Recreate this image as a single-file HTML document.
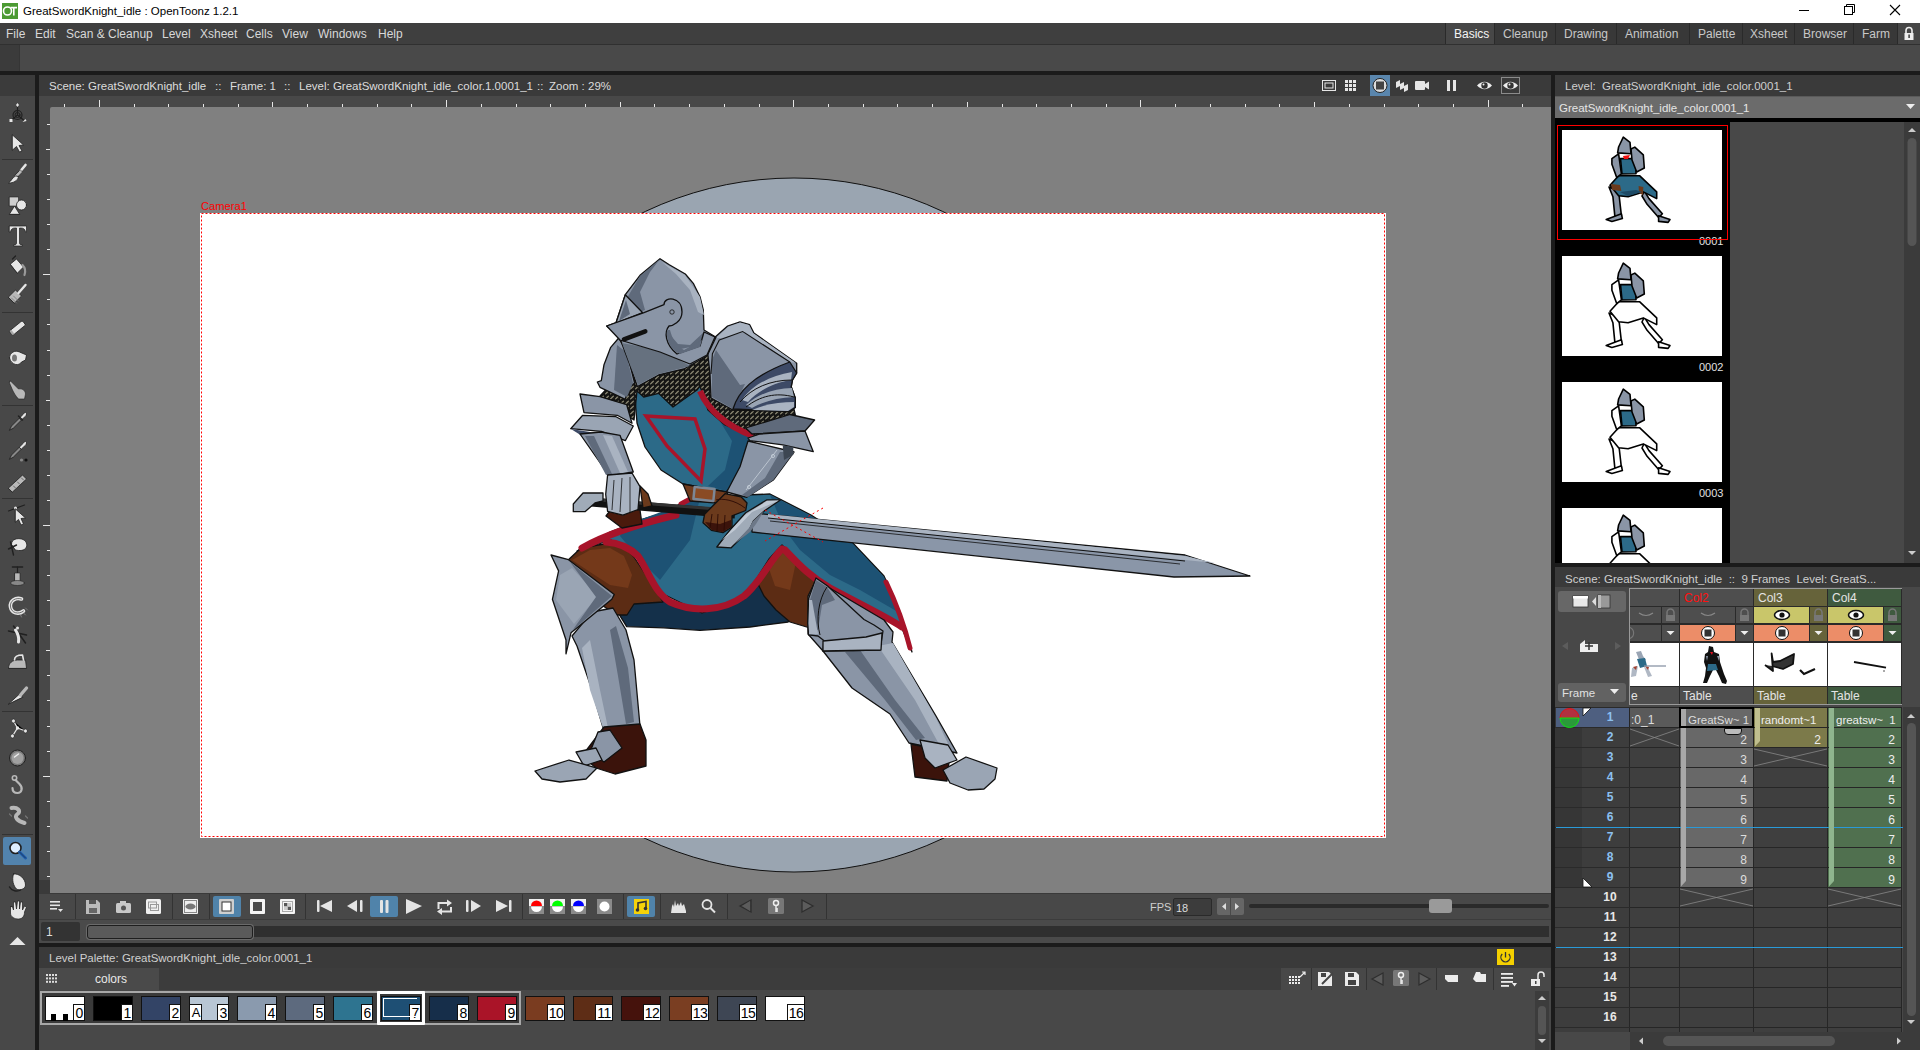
<!DOCTYPE html>
<html><head><meta charset="utf-8">
<style>
*{margin:0;padding:0;box-sizing:border-box}
html,body{width:1920px;height:1050px;overflow:hidden;background:#1b1b1b;font-family:"Liberation Sans",sans-serif;font-size:12px;color:#d8d8d8}
.a{position:absolute}
.t{position:absolute;white-space:nowrap;line-height:12px}
svg{position:absolute;overflow:visible}
</style></head><body>
<!-- title bar -->
<div class="a" style="left:0;top:0;width:1920px;height:23px;background:#fff"></div>
<svg style="left:2px;top:3px" width="16" height="16" viewBox="0 0 16 16">
<rect width="16" height="16" fill="#4b9a32"/>
<circle cx="5.5" cy="8" r="4" fill="none" stroke="#fff" stroke-width="1.6"/>
<path d="M8.5 4.6h6.5M11.8 4.6v8" stroke="#fff" stroke-width="1.6"/>
</svg>
<div class="t" style="left:23px;top:5px;color:#000;font-size:11.5px">GreatSwordKnight_idle : OpenToonz 1.2.1</div>
<svg style="left:1790px;top:0" width="130" height="23">
<path d="M9 10.5h10" stroke="#000" stroke-width="1"/>
<rect x="54.5" y="6.5" width="8" height="8" fill="none" stroke="#000"/>
<path d="M56.5 6.5v-2h8v8h-2" fill="none" stroke="#000"/>
<path d="M100 5l10 10M110 5l-10 10" stroke="#000" stroke-width="1.1"/>
</svg>
<!-- menu bar -->
<div class="a" style="left:0;top:23px;width:1920px;height:21px;background:#3f3f3f"></div>
<div class="a" style="left:0;top:44px;width:1920px;height:1px;background:#303030"></div>
<div class="t" style="left:6px;top:28px">File</div>
<div class="t" style="left:35px;top:28px">Edit</div>
<div class="t" style="left:66px;top:28px">Scan &amp; Cleanup</div>
<div class="t" style="left:162px;top:28px">Level</div>
<div class="t" style="left:200px;top:28px">Xsheet</div>
<div class="t" style="left:246px;top:28px">Cells</div>
<div class="t" style="left:282px;top:28px">View</div>
<div class="t" style="left:318px;top:28px">Windows</div>
<div class="t" style="left:378px;top:28px">Help</div>
<!-- room tabs -->
<div class="a" style="left:1445px;top:23px;width:453px;height:21px;background:#383838"></div>
<div class="a" style="left:1446px;top:23px;width:48px;height:21px;background:#474747"></div>
<div class="a" style="left:1445px;top:23px;width:1px;height:21px;background:#2a2a2a"></div>
<div class="a" style="left:1494px;top:23px;width:1px;height:21px;background:#2a2a2a"></div>
<div class="a" style="left:1555px;top:23px;width:1px;height:21px;background:#2a2a2a"></div>
<div class="a" style="left:1616px;top:23px;width:1px;height:21px;background:#2a2a2a"></div>
<div class="a" style="left:1689px;top:23px;width:1px;height:21px;background:#2a2a2a"></div>
<div class="a" style="left:1742px;top:23px;width:1px;height:21px;background:#2a2a2a"></div>
<div class="a" style="left:1794px;top:23px;width:1px;height:21px;background:#2a2a2a"></div>
<div class="a" style="left:1853px;top:23px;width:1px;height:21px;background:#2a2a2a"></div>
<div class="a" style="left:1897px;top:23px;width:1px;height:21px;background:#2a2a2a"></div>
<div class="a" style="left:1898px;top:23px;width:22px;height:21px;background:#464646"></div>
<div class="t" style="left:1454px;top:28px;color:#f4f4f4">Basics</div>
<div class="t" style="left:1503px;top:28px;color:#c8c8c8">Cleanup</div>
<div class="t" style="left:1564px;top:28px;color:#c8c8c8">Drawing</div>
<div class="t" style="left:1625px;top:28px;color:#c8c8c8">Animation</div>
<div class="t" style="left:1698px;top:28px;color:#c8c8c8">Palette</div>
<div class="t" style="left:1750px;top:28px;color:#c8c8c8">Xsheet</div>
<div class="t" style="left:1803px;top:28px;color:#c8c8c8">Browser</div>
<div class="t" style="left:1862px;top:28px;color:#c8c8c8">Farm</div>
<svg style="left:1903px;top:26px" width="12" height="15">
<path d="M3 7V4.5a3 3 0 0 1 6 0V7" fill="none" stroke="#eee" stroke-width="1.6"/>
<rect x="1.5" y="7" width="9" height="7" fill="#eee"/>
<rect x="5.3" y="8.5" width="1.6" height="3.5" fill="#444"/>
</svg>
<!-- toolbar row -->
<div class="a" style="left:0;top:45px;width:1920px;height:26px;background:#494949"></div>
<div class="a" style="left:0;top:45px;width:19px;height:26px;background:#3b3b3b"></div>
<div class="a" style="left:19px;top:45px;width:1px;height:26px;background:#353535"></div>

<div class="a" style="left:0;top:71px;width:1920px;height:4px;background:#1b1b1b"></div>
<div class="a" style="left:0;top:75px;width:35px;height:975px;background:#484848"></div>
<div class="a" style="left:0;top:75px;width:35px;height:21px;background:#3b3b3b"></div>
<div class="a" style="left:39px;top:75px;width:1512px;height:21px;background:#3a3a3a"></div>
<div class="t" style="left:49px;top:80px;color:#dcdcdc;font-size:11.5px">Scene: GreatSwordKnight_idle</div>
<div class="t" style="left:215px;top:80px;color:#dcdcdc;font-size:11.5px">::</div>
<div class="t" style="left:230px;top:80px;color:#dcdcdc;font-size:11.5px">Frame: 1</div>
<div class="t" style="left:284px;top:80px;color:#dcdcdc;font-size:11.5px">::</div>
<div class="t" style="left:299px;top:80px;color:#dcdcdc;font-size:11.5px">Level: GreatSwordKnight_idle_color.1.0001_1</div>
<div class="t" style="left:537px;top:80px;color:#dcdcdc;font-size:11.5px">::</div>
<div class="t" style="left:549px;top:80px;color:#dcdcdc;font-size:11.5px">Zoom : 29%</div>
<div class="a" style="left:39px;top:96px;width:1512px;height:797px;background:#484848"></div>
<div class="a" style="left:50px;top:107px;width:1501px;height:786px;background:#808080;border-top-left-radius:2px"></div>
<svg style="left:0;top:0" width="1920" height="1050" fill="#e6e6e6"><rect x="64" y="104" width="1" height="3"/><rect x="99" y="100" width="1" height="7"/><rect x="134" y="104" width="1" height="3"/><rect x="168" y="104" width="1" height="3"/><rect x="203" y="104" width="1" height="3"/><rect x="238" y="104" width="1" height="3"/><rect x="272" y="102" width="1" height="5"/><rect x="307" y="104" width="1" height="3"/><rect x="342" y="104" width="1" height="3"/><rect x="377" y="104" width="1" height="3"/><rect x="411" y="104" width="1" height="3"/><rect x="446" y="100" width="1" height="7"/><rect x="481" y="104" width="1" height="3"/><rect x="516" y="104" width="1" height="3"/><rect x="550" y="104" width="1" height="3"/><rect x="585" y="104" width="1" height="3"/><rect x="620" y="102" width="1" height="5"/><rect x="654" y="104" width="1" height="3"/><rect x="689" y="104" width="1" height="3"/><rect x="724" y="104" width="1" height="3"/><rect x="759" y="104" width="1" height="3"/><rect x="793" y="100" width="1" height="7"/><rect x="828" y="104" width="1" height="3"/><rect x="863" y="104" width="1" height="3"/><rect x="897" y="104" width="1" height="3"/><rect x="932" y="104" width="1" height="3"/><rect x="967" y="102" width="1" height="5"/><rect x="1002" y="104" width="1" height="3"/><rect x="1036" y="104" width="1" height="3"/><rect x="1071" y="104" width="1" height="3"/><rect x="1106" y="104" width="1" height="3"/><rect x="1140" y="100" width="1" height="7"/><rect x="1175" y="104" width="1" height="3"/><rect x="1210" y="104" width="1" height="3"/><rect x="1245" y="104" width="1" height="3"/><rect x="1279" y="104" width="1" height="3"/><rect x="1314" y="102" width="1" height="5"/><rect x="1349" y="104" width="1" height="3"/><rect x="1384" y="104" width="1" height="3"/><rect x="1418" y="104" width="1" height="3"/><rect x="1453" y="104" width="1" height="3"/><rect x="1488" y="100" width="1" height="7"/><rect x="1522" y="104" width="1" height="3"/><rect x="47" y="124" width="3" height="1"/><rect x="46" y="149" width="4" height="1"/><rect x="47" y="174" width="3" height="1"/><rect x="47" y="199" width="3" height="1"/><rect x="47" y="224" width="3" height="1"/><rect x="47" y="249" width="3" height="1"/><rect x="43" y="274" width="7" height="1"/><rect x="47" y="299" width="3" height="1"/><rect x="47" y="324" width="3" height="1"/><rect x="47" y="350" width="3" height="1"/><rect x="47" y="375" width="3" height="1"/><rect x="46" y="400" width="4" height="1"/><rect x="47" y="425" width="3" height="1"/><rect x="47" y="450" width="3" height="1"/><rect x="47" y="475" width="3" height="1"/><rect x="47" y="500" width="3" height="1"/><rect x="43" y="525" width="7" height="1"/><rect x="47" y="550" width="3" height="1"/><rect x="47" y="575" width="3" height="1"/><rect x="47" y="600" width="3" height="1"/><rect x="47" y="625" width="3" height="1"/><rect x="46" y="650" width="4" height="1"/><rect x="47" y="675" width="3" height="1"/><rect x="47" y="700" width="3" height="1"/><rect x="47" y="726" width="3" height="1"/><rect x="47" y="751" width="3" height="1"/><rect x="43" y="776" width="7" height="1"/><rect x="47" y="801" width="3" height="1"/><rect x="47" y="826" width="3" height="1"/><rect x="47" y="851" width="3" height="1"/><rect x="47" y="876" width="3" height="1"/></svg>
<div class="a" style="left:35px;top:75px;width:4px;height:975px;background:#1b1b1b"></div>
<div class="a" style="left:1551px;top:75px;width:4px;height:975px;background:#1b1b1b"></div>
<div class="a" style="left:39px;top:943px;width:1512px;height:4px;background:#1b1b1b"></div>
<div class="a" style="left:1555px;top:563px;width:365px;height:4px;background:#1b1b1b"></div>
<div class="a" style="left:39px;top:880px;width:11px;height:13px;background:#3a3a3a"></div>
<svg style="left:0;top:0" width="1920" height="1050">
<defs><clipPath id="cv"><rect x="50" y="107" width="1501" height="786"/></clipPath></defs>
<g clip-path="url(#cv)">
<circle cx="794" cy="525" r="347" fill="#9aa5b1" stroke="#111" stroke-width="1"/>
<rect x="200" y="213" width="1186" height="625" fill="#fff"/>
<rect x="201.5" y="213.5" width="1183" height="623" fill="none" stroke="#f00" stroke-width="1" stroke-dasharray="2 2"/>
</g>
<text x="201" y="210" fill="#f00" font-size="11" font-family="Liberation Sans" textLength="46" lengthAdjust="spacingAndGlyphs">Camera1</text>
</svg>

<svg style="left:0;top:0" width="1920" height="1050" stroke-linejoin="round">
<!-- ===== LOWER BODY ===== -->
<g stroke="#111" stroke-width="1.3">
<!-- dark under skirt -->
<path fill="#14304a" d="M612,598 L620.5,616.7 L626.7,626.6 L663.8,627.8 L700,630.3 L750,627 L788,622 L806,602 L800,575 L770,570 L744,596 L702,612 L661,598 Z"/>
<!-- brown thighs -->
<path fill="#5c2c14" d="M566,562 L581,548 L604,544 L624,546 L634,557 L649,579.5 L663,602 L634,604 L627,615 L617,615 L600,604 L575,598 L560,582 Z"/>
<path fill="#74391a" stroke="none" d="M572,560 L590,550 L610,548 L624,556 L632,575 L628,588 L610,585 L590,572 Z"/>
<path fill="#5c2c14" d="M756,580 L769,558 L782,544 L800,562 L816,578 L812,600 L810,628 L790,622 L776,610 L764,596 Z"/>
<path fill="#74391a" stroke="none" d="M768,566 L782,548 L796,562 L790,590 L775,586 Z"/>
<!-- skirt -->
<path fill="#2c6a88" d="M577,551 L610,532 L643,519 L663,513 L680,504 L692,497 L770,494 L811,515 L850,540 L884,576 L900,612 L912,652 L900,624 L815,578 L782,545 L769,559 L744,599 L702,613 L661,593 L640,559 L611,540 Z"/>
</g>
<path fill="#1d5274" d="M625,525 L700,498 L690,540 L660,580 L640,560 L620,536 Z"/>
<path fill="#1d5274" d="M770,495 L811,516 L850,541 L884,577 L898,612 L860,590 L830,575 L800,550 L785,530 Z"/>

<!-- red trims -->
<g fill="none" stroke="#a8142a" stroke-width="7" stroke-linecap="round">
<path d="M606,542 C620,543 630,548 638,556 C648,570 654,592 670,602 C692,612 722,612 744,596 C760,583 770,560 782,549"/>
<path d="M785,550 C800,566 812,578 830,588 C860,604 885,616 902,627"/>
<path stroke-width="5" d="M886,582 C898,607 906,632 910,648"/>
<path stroke-width="7" d="M582,548 C600,538 625,527 676,515"/><path stroke-width="5" d="M681,504 L692,498"/>
</g>
<g stroke="#111" stroke-width="1.3">
<!-- left leg greave -->
<path fill="#8a95a6" d="M572,636 L592,612 L613,608 L626,630 L634,660 L640,726 L604,731 L592,690 L577,646 Z"/>
<path fill="#5f6a7b" stroke="none" d="M610,630 L616,626 L628,668 L634,722 L626,724 L618,676 Z"/>
<path fill="#a9b3c1" stroke="none" d="M582,648 L590,640 L600,690 L608,728 L603,728 L590,690 Z"/>
<!-- left foot -->
<path fill="#3b130b" d="M604,727 L640,724 L646,740 L646,766 L615,774 L596,768 L582,756 Z"/>
<path fill="#8a95a6" d="M598,732 L610,730 L622,748 L604,762 L590,752 Z"/>
<path fill="#9aa5b4" d="M576,752 L596,748 L602,760 L584,766 Z"/>
<path fill="#9aa5b4" d="M535,771 L569,760 L597,768 L586,779 L560,782 L542,779 Z"/>
<!-- left knee -->
<path fill="#8a95a6" d="M551,555 L568.5,559.7 L614.3,594.4 L611.8,599.3 L571,632.8 L566,653.8 L566,640 L552.4,599.3 L558.6,570.9 Z"/>
<path fill="#9aa5b4" stroke="none" d="M560,575 L572,568 L598,596 L574,624 L556,600 Z"/>
<path fill="#5f6a7b" stroke="none" d="M570,562 L612,596 L572,631 L596,597 Z"/>
<!-- right leg -->
<path fill="#8a95a6" d="M808,596 L816,580 L850,600 L884,620 L893,632 L892,642 L936,716 L957,753 L909,743 L890,714 L852,688 L823,651 L808,634 Z"/>
<path fill="#5f6a7b" stroke="none" d="M845,652 L860,650 L895,700 L925,738 L916,740 L885,700 Z"/>
<path fill="#a9b3c1" stroke="none" d="M878,646 L893,643 L936,718 L950,748 L940,746 L915,700 Z"/>
<path fill="#8a95a6" d="M816,578 L827.6,586 L864,619.5 L874,625 L883,631 L880,650 L823,651 L823.8,640.5 L818,636 L808.6,634.8 L807.6,623.3 L808.6,598.6 Z"/>
<path fill="#5f6a7b" stroke="none" d="M816,580 L827,587 L835,600 L822,605 L818,630 L811,630 L810,600 Z"/><path fill="#a9b3c1" stroke="none" d="M809,600 L812,600 L818,634 L809,634 Z"/><path fill="none" stroke-width="1" d="M827,587 C818,600 816,620 820,635"/>
<path fill="#a9b3c1" d="M823,641 L866,637 L882,633 L881,650 L823,651 Z"/>
<!-- right foot -->
<path fill="#3b130b" d="M911,744 L950,752 L947,781 L915,777 Z"/>
<path fill="#a9b3c1" d="M920,740 L948,745 L957,760 L935,768 L925,758 Z"/>
<path fill="#9aa5b4" d="M943,770 L966,757 L997,768 L995,779 L984,789 L968,790 L950,783 Z"/>
</g>
<!-- ===== UPPER BODY ===== -->
<g stroke="#111" stroke-width="1.3">
<!-- chainmail -->
<!-- chest tabard -->
<path fill="#2c6a88" d="M634,385 L700,380 L722,410 L754,434 L752,445 L735,480 L726,492 L683,484 L661,470 L645,447 L637,423 Z"/>
</g>
<path fill="#1d5274" d="M712,406 L754,435 L750,448 L735,480 L726,491 L708,486 L725,470 L732,441 L718,418 Z"/>
<g stroke="#111" stroke-width="1.3"><defs><pattern id="cm" width="5" height="5" patternUnits="userSpaceOnUse"><rect width="5" height="5" fill="#1f1e1a"/><path d="M0.6,3.8 L3.4,1.2" stroke="#9a967f" stroke-width="1.1" stroke-linecap="round"/></pattern></defs>
<path fill="url(#cm)" d="M622,345 L707,350 L712,370 L735,408 L793,405 L796,418 L755,437 L725,425 L708,410 L700,386 L697,390 L687,397 L673,407 L658.6,393.4 L643.7,397 L637,391 L634,420 L600,396 L615,380 Z"/>
</g>
<g fill="none" stroke="#a8142a" stroke-linejoin="miter">
<path stroke-width="6" d="M700,391 C708,410 725,425 753,436"/>
<path stroke-width="3.5" d="M646,416 L695,419 L705,449 L701,481 L667,446 Z"/>
</g>
<g stroke="#111" stroke-width="1.3">
<!-- belt -->
<path fill="#6f3b1d" d="M683,484 L727,492 L731,504 L690,501 Z"/>
<rect x="694" y="488" width="20" height="12" fill="#8a4b25" stroke="#7d8795" stroke-width="2.5" transform="rotate(6 704 494)"/>
<!-- left pauldron -->
<path fill="#8a95a6" d="M618.7,338 L610.7,347.3 L604,364.7 L601.3,380.7 L597.3,382 L600,387.3 L625.3,399.3 L629.3,386 L634.7,383.3 L626.7,351.3 Z"/>
<path fill="#5f6a7b" stroke="none" d="M617,345 L626,352 L633,383 L627,397 L614,390 Z"/>
<path fill="#8a95a6" d="M580,394 L600,396.7 L626.7,404.7 L632,423.3 L617.3,415.3 L584,412.7 Z"/>
<path fill="#9aa5b4" d="M570.7,428.7 L582.7,415.3 L616,416.7 L633.3,426 L625.3,440.7 L601.3,431.3 Z"/>
<path fill="#3d4a66" stroke="none" d="M571,429 L590,432 L605,436 L582,436 Z"/>
<!-- left forearm -->
<path fill="#8a95a6" d="M580,434 L601,432 L620,435.3 L633.3,472 L609.3,476 Z"/>
<path fill="#a9b3c1" stroke="none" d="M603,435 L612,436 L628,472 L620,473 Z"/>
<path fill="#5f6a7b" stroke="none" d="M585,436 L594,436 L612,474 L606,475 Z"/>
<!-- right pauldron -->
<path fill="#8a95a6" d="M705.5,333 L715.2,337.1 L727.6,326 L740,321.9 L749.7,324.7 L753.9,333 L796.7,363.3 L796.7,373 L792.5,380 L791.2,386.8 L795.3,397.9 L795.3,407.5 L788.4,411.7 L733,410 L711,398 L710,374 Z"/>
<path fill="#a9b3c1" stroke="none" d="M716,338 L728,327 L740,322.5 L749,325 L753,333 L796,363 L790,362 L745,332 L722,338 Z"/>
<path fill="#5f6a7b" stroke="none" d="M712,360 L716,350 L740,385 L745,384 L733,409 L712,397 Z"/>
<path fill="none" stroke-width="1.1" d="M711,374 L712.4,353.7 L719.3,339.9 L742.8,331.6 L789.8,362"/>
<!-- lames -->
<path fill="#3d4a66" d="M733,409 C738,392 752,376 789.8,362 L796.7,373 L792.5,380 L791.2,386.8 L795.3,397.9 L795.3,407.5 L788.4,411.7 Z"/>
<path fill="#a9b3c1" stroke="none" d="M742,400 C752,385 770,376 792,372 L791,380 C772,383 757,392 748,402 Z"/>
<path fill="#9aa5b4" stroke="none" d="M746,405 C758,394 775,388 792,388 L794,397 C776,398 762,402 752,408 Z"/>
<path fill="#a9b3c1" stroke="none" d="M752,410 C765,404 780,402 794,402 L794,407 L788,411 Z"/>
<path fill="none" stroke-width="1" d="M740,402 C752,388 770,380 792,380 M746,407 C760,396 776,392 794,397"/>
<!-- lower lames -->
<path fill="#5f6a7b" d="M745.6,428 L790,414.5 L814.6,420 L805,431 L752,434 Z"/>
<path fill="#8a95a6" d="M748,438 L760,434 L805,431 L813.3,451.7 L782.9,444.8 L749.7,440.7 Z"/>
<!-- right forearm -->
<path fill="#8a95a6" d="M748,441 L794,452 L773.3,480 L746.7,497.3 L726.7,492 L740,466.7 Z"/>
<path fill="#5f6a7b" stroke="none" d="M780,452 L794,452 L773.3,480 L748,497 L742,495 L765,478 Z"/>
<path fill="#3d4652" stroke="none" d="M782.7,445.3 L793.3,447 L793.3,454.7 L784,460 Z"/>
<path fill="none" stroke="#c8d0da" stroke-width="0.8" d="M777,450 L746,490"/>
<circle cx="773" cy="456" r="1.6" fill="none" stroke="#c8d0da" stroke-width="0.8"/>
<circle cx="749" cy="487" r="1.6" fill="none" stroke="#c8d0da" stroke-width="0.8"/>
<!-- helmet -->
<path fill="#8a95a6" d="M660,258.7 L669.3,264.7 L685.3,274 L693.3,283.3 L700,296.7 L703.3,310 L704,330 L716,337.3 L707,356 L684,369 L658.6,375 L637.4,386.6 L630,365 L621.3,342 L618.7,335.3 L606.7,326 L616,322.7 L625.3,294.7 L640,275.3 Z"/>
<path fill="#5f6a7b" stroke="none" d="M627,298 L640,276 L660,259 L650,272 L640,292 L645,310 L630,316 Z"/>
<path fill="#a9b3c1" stroke="none" d="M662,262 L685,275 L700,297 L704,315 L698,312 L690,290 L676,274 Z"/>
<path fill="#66717f" stroke="none" d="M622,343 L648,348 L672,356 L690,366 L658.6,374 L638,385 L630,365 Z"/>
<path fill="#5f6a7b" stroke="none" d="M666,330 L676,350 L700,345 L704,332 L690,345 L678,344 Z"/>
<path fill="#9aa5b4" d="M616,323 L625.3,294.7 L642.7,312.7 Z"/><path fill="#5f6a7b" stroke="none" d="M619,321 L626,300 L630,314 Z"/>
<!-- visor -->
<path fill="#8a95a6" d="M606.7,326 L644,312.7 L664,304.7 C664,296 682,296 682,312 C682,322 672,326 669,326 C664,332 665,344 677,354 L700,346 L704,332 L715,337 L707,355 L690,364 L660,352 L620,340 Z"/>
<path fill="#5f6a7b" stroke="none" d="M667,330 C666,340 670,350 680,354 L700,347 L702,340 L684,350 C676,346 672,338 670,330 Z"/>
<circle cx="672" cy="312" r="2.2" fill="none" stroke-width="0.8"/>
<path d="M624,339.3 L645.3,331.3" stroke-width="4.5" stroke-linecap="round"/>

<!-- sword hilt -->
<path fill="none" stroke="#111" stroke-width="9" stroke-linecap="butt" d="M591,502 L735,514"/><path fill="none" stroke="#333" stroke-width="3" d="M600,500 L730,510"/>
<path fill="#a0abb8" d="M573.3,504 L583,493 L603,493 L603,501 L595,503 L585,511.7 L573.3,511.7 Z"/>
<!-- left hand & gauntlet -->
<path fill="#4a1a0c" d="M612,508 L640,510 L642,524 L622,528 L606,516 Z"/>
<path fill="#6b3a1c" d="M640,486 L648,494 L652,506 L643,508 Z"/>
<path fill="#a9b3c1" d="M607.6,475 L632,473 L640,486.7 L638,509.5 L622.9,515.2 L607.6,511.4 L605.7,494.3 Z"/>
<path fill="none" stroke-width="0.8" d="M614,480 L612,510 M622,478 L620,512 M630,477 L630,512"/>
<!-- right hand -->
<path fill="#6b3a1c" d="M713.7,505 L725,493.7 L741,496.8 L747,503 L745.7,510.5 L732,515.8 L732,527 L722.9,532.6 L711.4,530.3 L703,522.7 L704.6,514.3 Z"/>
<path fill="#3b130b" stroke="none" d="M705,522 L712,530 L722,532 L731,527 L731,520 L720,524 Z"/>
<path fill="none" stroke="#2a0a04" stroke-width="0.9" d="M712,514 L710,528 M718,514 L717,531 M725,515 L724,531 M716,500 C722,498 735,500 745,508"/>
<!-- blade -->
<path fill="#8a96a8" d="M752,513 L1185,555 L1250,576 L1174,577 L752,532 Z"/>
<path fill="#a9b3c1" stroke="none" d="M768,514 L1185,556 L1215,563 L768,518 Z"/>
<path fill="none" stroke-width="1" d="M768,518 L1185,561"/>
<path fill="none" stroke-width="0.8" d="M770,521 L1180,564"/>
<!-- crossguard -->
<path fill="#a0abb8" d="M716.8,547 L730,530 L745.7,512.8 L767,499.8 L780.8,499.8 L764.8,510.5 L753.4,521 L749.5,529.5 L731.2,547.8 Z"/>
<path fill="#c0c9d4" stroke="none" d="M722,540 L745,515 L767,501 L779,500.5 L752,512 L735,530 Z"/>
<path fill="#6d7888" stroke="none" d="M733,545 L749,528 L753,521 L764,511 L756,524 L750,532 Z"/>
</g>
<!-- red center marker -->
<path d="M765,510 L823,542 M823,508 L765,541" stroke="#f00" stroke-width="1" stroke-dasharray="2 3" fill="none"/>
</svg>

<svg style="left:0;top:0" width="36" height="1050" stroke-linecap="round" stroke-linejoin="round">
<rect x="2" y="159" width="31" height="1" fill="#333"/>
<rect x="2" y="312" width="31" height="1" fill="#333"/>
<rect x="2" y="405" width="31" height="1" fill="#333"/>
<rect x="2" y="498" width="31" height="1" fill="#333"/>
<rect x="2" y="711" width="31" height="1" fill="#333"/>
<rect x="2" y="834" width="31" height="1" fill="#333"/>
<rect x="3" y="837" width="28" height="28" rx="2" fill="#5283ad"/>
<g transform="translate(17.5 113)"><path d="M0,-7 V2 M0,2 L-6,7 M0,2 L6,7" stroke="#202020" stroke-width="1.2" fill="none"/><circle cx="0" cy="2" r="4.5" fill="none" stroke="#202020" stroke-width="1.2"/><circle cx="0" cy="2" r="2.5" fill="none" stroke="#202020" stroke-width="1"/><path d="M0,-10 L1.5,-8 L0,-6 L-1.5,-8 Z" fill="#e6e6e6"/><rect x="-8" y="6" width="3" height="3" fill="#e6e6e6"/><path d="M5,9 L8,6 L9,8 Z" fill="#e6e6e6"/></g>
<g transform="translate(17.5 143)"><path d="M-5,-8 L6,2 L1.5,2.5 L4.5,8 L2,9 L-1,3.5 L-5,7 Z" fill="#e6e6e6" stroke="#202020" stroke-width="0.8"/></g>
<g transform="translate(17.5 174)"><path d="M8,-9 L3,-3" stroke="#e6e6e6" stroke-width="2.6"/><path d="M3,-4 L5,-2 L-1,4 L-3,2 Z" fill="#b8b8b8" stroke="#202020" stroke-width="0.6"/><path d="M-2,2 C-5,3 -6,7 -9,9 C-4,9 0,7 1,3 Z" fill="#e6e6e6" stroke="#202020" stroke-width="0.8"/></g>
<g transform="translate(17.5 205)"><rect x="-8" y="-8" width="9" height="9" fill="#cfcfcf" stroke="#202020" stroke-width="0.6"/><circle cx="4" cy="0" r="5" fill="#e6e6e6" stroke="#202020" stroke-width="0.8"/><path d="M-8,9 L-3,1 L2,9 Z" fill="#e6e6e6" stroke="#202020" stroke-width="0.8"/></g>
<g transform="translate(17.5 236)"><path d="M-8,-10 H9 V-4 H8 C7.5,-7 6,-8 3,-8 H2 V7 C2,8.5 3,9 5,9 V10 H-4 V9 C-2,9 -1,8.5 -1,7 V-8 H-2 C-5,-8 -6.5,-7 -7,-4 H-8 Z" fill="#e6e6e6" stroke="#202020" stroke-width="0.7"/></g>
<g transform="translate(17.5 266)"><path d="M-7,-2 L-1,-7 L6,1 L0,7 Z" fill="#e6e6e6" stroke="#202020" stroke-width="0.8"/><path d="M-5,-7 L-2,-10" stroke="#202020" stroke-width="1.2"/><path d="M5,-1 C8,2 8,6 7,9" stroke="#999" stroke-width="2.2" fill="none"/></g>
<g transform="translate(17.5 294)"><path d="M-9,3 L-2,-4 L4,2 L-3,9 Z" fill="#b8b8b8" stroke="#202020" stroke-width="0.8"/><path d="M-6,4 L-1,9 M-4,2 L1,7" stroke="#777" stroke-width="0.8"/><path d="M1,-1 L8,-9" stroke="#e6e6e6" stroke-width="2.4"/></g>
<g transform="translate(17.5 328)"><path d="M-8,3 L3,-6 C4,-7 5,-7 6,-6 L8,-3 L-3,6 C-4,7 -5,7 -6,6 Z" fill="#e6e6e6" stroke="#202020" stroke-width="0.8"/><path d="M-8,3 L-5,7 L-3,6 L-6,2 Z" fill="#aaa"/></g>
<g transform="translate(17.5 358)"><path d="M-8,0 C-8,-6 -2,-8 2,-6 L9,-3 L8,2 L4,4 C2,8 -6,8 -8,0 Z" fill="#e6e6e6" stroke="#202020" stroke-width="0.8"/><ellipse cx="-3" cy="0" rx="2.5" ry="3.5" fill="#777"/></g>
<g transform="translate(17.5 390)"><path d="M-7,-9 L1,-1 C5,-2 8,1 8,4 L7,9 L1,9 C-2,6 -4,2 -5,0 L-8,-7 Z" fill="#b8b8b8" stroke="#202020" stroke-width="0.6"/></g>
<g transform="translate(17.5 421)"><path d="M-8,9 L-6,5 L3,-4 L5,-2 L-4,7 Z" fill="#888" stroke="#202020" stroke-width="0.8"/><path d="M2,-3 L6,-7 C7,-9 9,-9 9,-7 C9,-5 7,-4 6,-3 L4,-1 Z" fill="#e6e6e6" stroke="#202020" stroke-width="0.8"/><path d="M1,-5 L5,-1" stroke="#202020" stroke-width="1.5"/></g>
<g transform="translate(17.5 452)"><path d="M-8,7 L-6,3 L3,-6 L5,-4 L-4,5 Z" fill="#888" stroke="#202020" stroke-width="0.8"/><path d="M2,-5 L6,-9 C7,-11 9,-11 9,-9 C9,-7 7,-6 6,-5 L4,-3 Z" fill="#e6e6e6" stroke="#202020" stroke-width="0.8"/><circle cx="4" cy="8" r="1.6" fill="#888"/><circle cx="8.5" cy="8" r="1.6" fill="#111"/></g>
<g transform="translate(17.5 483)"><path d="M-9,5 L5,-8 L9,-4 L-5,9 Z" fill="#b8b8b8" stroke="#202020" stroke-width="0.8"/><path d="M-4,3 L-2,5 M0,-1 L2,1 M4,-5 L6,-3" stroke="#555" stroke-width="0.8"/></g>
<g transform="translate(17.5 515)"><path d="M-9,-4 L7,-10" stroke="#202020" stroke-width="1.2"/><circle cx="-2" cy="-7" r="1.5" fill="#e6e6e6"/><path d="M-2,-6 L8,3 L3.5,3.5 L6,9 L3.5,10 L1,4.5 L-2,7 Z" fill="#e6e6e6" stroke="#202020" stroke-width="0.8"/></g>
<g transform="translate(17.5 546)"><path d="M-6,-2 C-6,-7 0,-8 4,-7 C8,-6 10,-3 9,1 C7,5 2,5 -2,4 Z" fill="#e6e6e6" stroke="#202020" stroke-width="0.8"/><path d="M-9,3 L-1,-1 M-7,-4 L-4,9" stroke="#202020" stroke-width="1.4"/></g>
<g transform="translate(17.5 576)"><path d="M-5,-9 H5" stroke="#202020" stroke-width="1.6"/><path d="M0,-9 V-3" stroke="#202020" stroke-width="1.2"/><rect x="-2.5" y="-3" width="5" height="9" fill="#b8b8b8" stroke="#202020" stroke-width="0.6"/><ellipse cx="0" cy="7" rx="7" ry="2.5" fill="#888" stroke="#202020" stroke-width="0.6"/></g>
<g transform="translate(17.5 606)"><path d="M4,-7 C-2,-9 -8,-5 -7,1 C-6,7 1,9 6,5" stroke="#e6e6e6" stroke-width="3.6" fill="none"/><path d="M4,-7 C-2,-9 -8,-5 -7,1 C-6,7 1,9 6,5" stroke="#202020" stroke-width="0.6" fill="none"/><path d="M8,2 L10,4 M6,7 L8,9 M3,9 L4,11" stroke="#888" stroke-width="0.8"/></g>
<g transform="translate(17.5 634)"><path d="M-9,-3 L9,1 M-4,-8 L8,9" stroke="#202020" stroke-width="1.5"/><path d="M-2,-4 C0,-1 2,2 1,8" stroke="#e6e6e6" stroke-width="3" fill="none"/><circle cx="0" cy="-6" r="1.5" fill="#e6e6e6"/></g>
<g transform="translate(17.5 662)"><path d="M-9,6 C-9,1 -5,-2 0,-2 L8,-2 L9,6 Z" fill="#b8b8b8" stroke="#202020" stroke-width="0.8"/><path d="M-3,-2 C-3,-6 0,-7 5,-7 L6,-2" fill="none" stroke="#e6e6e6" stroke-width="1.6"/></g>
<g transform="translate(17.5 695)"><path d="M-9,9 L2,-1 L5,2 Z" fill="#e6e6e6" stroke="#202020" stroke-width="0.8"/><path d="M3,0 L9,-7" stroke="#b8b8b8" stroke-width="3.4"/></g>
<g transform="translate(17.5 729)"><path d="M-4,-8 L0,-1 L8,2 M0,-1 L-5,7" stroke="#e6e6e6" stroke-width="1.3"/><circle cx="-4" cy="-8" r="2" fill="#e6e6e6" stroke="#202020" stroke-width="0.6"/><circle cx="8" cy="2" r="2" fill="#e6e6e6" stroke="#202020" stroke-width="0.6"/><circle cx="-5" cy="7" r="2" fill="#e6e6e6" stroke="#202020" stroke-width="0.6"/><circle cx="0" cy="-1" r="1.7" fill="#e6e6e6"/></g>
<g transform="translate(17.5 758)"><circle cx="0" cy="0" r="8" fill="#777" stroke="#202020" stroke-width="1"/><circle cx="0" cy="0" r="6" fill="#a0a0a0"/><path d="M-3,-1 L1,-4" stroke="#eee" stroke-width="1.4"/></g>
<g transform="translate(17.5 785)"><circle cx="-3" cy="-7" r="2.2" fill="none" stroke="#b8b8b8" stroke-width="1.6"/><path d="M-2,-5 L2,-1 C6,3 4,8 0,8 C-4,8 -5,5 -5,3" stroke="#b8b8b8" stroke-width="2.2" fill="none"/></g>
<g transform="translate(17.5 816)"><path d="M-6,-8 C0,-9 4,-5 0,-2 C-4,1 0,5 7,7" stroke="#b8b8b8" stroke-width="4" fill="none"/><path d="M-8,-2 L-6,0 M8,0 L10,2" stroke="#777" stroke-width="1.2"/></g>
<g transform="translate(17.5 851)"><circle cx="-2" cy="-3" r="5.5" fill="#ddeeff" stroke="#202020" stroke-width="1.6"/><path d="M2,1 L8,7" stroke="#1f5fb0" stroke-width="3"/><path d="M2,1 L8,7" stroke="#202020" stroke-width="0.6"/></g>
<g transform="translate(17.5 882)"><path d="M-4,-8 C2,-9 8,-3 8,3 C8,7 2,9 -1,7 C-4,4 -6,-2 -4,-8 Z" fill="#e6e6e6" stroke="#202020" stroke-width="0.8"/><path d="M-8,5 C-6,9 0,10 3,8" stroke="#202020" stroke-width="1.5" fill="none"/></g>
<g transform="translate(17.5 910)"><path d="M-7,-3 L-7,3 C-7,7 -3,9 1,9 C5,9 7,6 7,2 L9,-3 L7,-4 L5,0 L5,-8 L3,-8 L2,-1 L2,-9 L0,-9 L-1,-1 L-2,-8 L-4,-8 L-4,0 L-5,-3 Z" fill="#e6e6e6" stroke="#202020" stroke-width="0.7"/></g>
<g transform="translate(17.5 941)"><path d="M-8,4 L0,-4 L8,4 Z" fill="#e6e6e6"/></g>
</svg>
<div class="a" style="left:39px;top:893px;width:1512px;height:27px;background:#484848;border-top:1px solid #3a3a3a"></div>
<div class="a" style="left:39px;top:919px;width:1512px;height:1px;background:#3c3c3c"></div>
<div class="a" style="left:39px;top:920px;width:1512px;height:23px;background:#4a4a4a"></div>
<div class="a" style="left:41px;top:922px;width:39px;height:19px;background:#333;border-radius:2px"></div>
<div class="t" style="left:46px;top:926px;color:#ddd;font-size:12px">1</div>
<div class="a" style="left:86px;top:926px;width:1463px;height:11px;background:#2f2f2f"></div>
<div class="a" style="left:87px;top:925px;width:166px;height:14px;background:#5a5a5a;border:1.5px solid #1e1e1e;border-radius:3px;box-shadow:0 0 0 1px #6a6a6a"></div>
<svg style="left:0;top:0" width="1551" height="1050">
<rect x="75" y="894" width="1" height="25" fill="#333"/>
<rect x="172" y="894" width="1" height="25" fill="#333"/>
<rect x="209" y="894" width="1" height="25" fill="#333"/>
<rect x="305" y="894" width="1" height="25" fill="#333"/>
<rect x="522" y="894" width="1" height="25" fill="#333"/>
<rect x="623" y="894" width="1" height="25" fill="#333"/>
<rect x="660" y="894" width="1" height="25" fill="#333"/>
<rect x="727" y="894" width="1" height="25" fill="#333"/>
<rect x="826" y="894" width="1" height="25" fill="#333"/>
<rect x="213" y="896" width="28" height="21" rx="2" fill="#5083aa"/>
<rect x="370" y="896" width="28" height="21" rx="2" fill="#5083aa"/>
<rect x="627" y="896" width="28" height="21" rx="2" fill="#5083aa"/>
<g fill="#e4e4e4"><rect x="50" y="901" width="10" height="1.6"/><rect x="50" y="904.5" width="10" height="1.6"/><rect x="50" y="908" width="7" height="1.6"/><path d="M58,909 h5 l-2.5,3 z"/></g>
<path d="M86,900 h11 l3,3 v11 h-14 z" fill="#bbb"/><rect x="89" y="900" width="7" height="4" fill="#555"/><rect x="89" y="908" width="8" height="5" fill="#666"/>
<rect x="116" y="903" width="15" height="10" rx="1.5" fill="#c8c8c8"/><rect x="120" y="901" width="6" height="3" fill="#c8c8c8"/><circle cx="123.5" cy="908" r="2.5" fill="#555"/>
<rect x="146" y="899" width="15" height="15" rx="1.5" fill="#f0f0f0"/><rect x="148.5" y="902" width="8" height="6" fill="none" stroke="#999"/><rect x="150.5" y="904.5" width="8" height="6" fill="none" stroke="#999"/>
<rect x="183" y="899" width="15" height="15" rx="1" fill="#f0f0f0"/><rect x="184.5" y="900.5" width="12" height="12" fill="none" stroke="#222" stroke-dasharray="1 1"/><ellipse cx="190.5" cy="906.5" rx="5" ry="3" fill="#777"/>
<rect x="219" y="899" width="15" height="15" rx="1" fill="#cfcfcf"/><rect x="222" y="902" width="9" height="9" fill="#fff" stroke="#333"/>
<rect x="250" y="899" width="15" height="15" rx="1" fill="#f4f4f4"/><rect x="253" y="902" width="9" height="9" fill="#4a4a4a"/>
<rect x="280" y="899" width="15" height="15" rx="1" fill="#f4f4f4"/><rect x="282.5" y="901.5" width="10" height="10" fill="none" stroke="#aaa"/><rect x="284" y="903" width="3.5" height="3.5" fill="#555"/><rect x="287.5" y="906.5" width="3.5" height="3.5" fill="#555"/><rect x="287.5" y="903" width="3.5" height="3.5" fill="#ccc"/><rect x="284" y="906.5" width="3.5" height="3.5" fill="#ccc"/>
<g fill="#e4e4e4">
<rect x="317" y="900" width="2.5" height="12" rx="1"/><path d="M320,906 L332,900 V912 Z"/>
<path d="M347,906 L357,900 V912 Z"/><rect x="360" y="900" width="2.5" height="12" rx="1"/>
<rect x="380" y="900" width="3" height="13" rx="1"/><rect x="385.5" y="900" width="3" height="13" rx="1"/>
<path d="M406,899 L422,906 L406,914 Z"/>
</g>
<path d="M438.5,909 V903 H448 M451,907 V911.5 H441" fill="none" stroke="#e4e4e4" stroke-width="2"/><path d="M447,899.5 L452,903 L447,906.5 Z M442,908 L437,911.5 L442,915 Z" fill="#e4e4e4"/>
<g fill="#e4e4e4"><rect x="466" y="900" width="2.5" height="12" rx="1"/><path d="M471,900 L481,906 L471,912 Z"/>
<path d="M496,900 L508,906 L496,912 Z"/><rect x="509" y="900" width="2.5" height="12" rx="1"/></g>
<rect x="529" y="899" width="15" height="15" fill="#f2f2f2"/><rect x="529" y="906" width="15" height="8" fill="#8a8a8a"/><path d="M531,906 a5.5,5.5 0 0 1 11,0 z" fill="#f00"/><path d="M531,906.5 a5.5,5.5 0 0 0 11,0 z" fill="#fff"/>
<rect x="550" y="899" width="15" height="15" fill="#f2f2f2"/><rect x="550" y="906" width="15" height="8" fill="#8a8a8a"/><path d="M552,906 a5.5,5.5 0 0 1 11,0 z" fill="#0f0"/><path d="M552,906.5 a5.5,5.5 0 0 0 11,0 z" fill="#fff"/>
<rect x="571" y="899" width="15" height="15" fill="#f2f2f2"/><rect x="571" y="906" width="15" height="8" fill="#8a8a8a"/><path d="M573,906 a5.5,5.5 0 0 1 11,0 z" fill="#00f"/><path d="M573,906.5 a5.5,5.5 0 0 0 11,0 z" fill="#fff"/>
<rect x="597" y="899" width="15" height="15" fill="#8a8a8a"/><circle cx="604.5" cy="906.5" r="5" fill="#fff"/>
<rect x="634" y="899" width="15" height="15" fill="#f5d20a"/><path d="M638,910 V903 L646,901.5 V908" fill="none" stroke="#333" stroke-width="1.6"/><circle cx="637.5" cy="910" r="1.8" fill="#333"/><circle cx="645.5" cy="908.5" r="1.8" fill="#333"/>
<path d="M671,913 L672,906 L673,904 L674,907 L675,900 L676,906 L678,903 L679,906 L681,902 L682,906 L684,904 L686,911 L686,913 Z" fill="#e4e4e4"/>
<circle cx="707" cy="904.5" r="4.5" fill="none" stroke="#e4e4e4" stroke-width="1.8"/><path d="M710.5,908 L715,912.5" stroke="#e4e4e4" stroke-width="2"/>
<path d="M751,900 L740,906 L751,912 Z" fill="none" stroke="#2e2e2e" stroke-width="1.3"/><path d="M750,901 L742,906 L750,911 Z" fill="#5c5c5c"/>
<rect x="768" y="898" width="16" height="16" rx="1.5" fill="#777"/><circle cx="776" cy="903" r="2.5" fill="none" stroke="#eee" stroke-width="1.5"/><path d="M776,905.5 V912 M776,909 h2 M776,911 h2" stroke="#eee" stroke-width="1.4"/>
<path d="M802,900 L813,906 L802,912 Z" fill="#5c5c5c" stroke="#2e2e2e" stroke-width="1.3"/>
</svg>
<div class="t" style="left:1150px;top:901px;color:#cfcfcf;font-size:11px">FPS</div>
<div class="a" style="left:1173px;top:898px;width:39px;height:18px;background:#3c3c3c;border:1px solid #2a2a2a;border-radius:2px"></div>
<div class="t" style="left:1176px;top:902px;color:#dcdcdc;font-size:11px">18</div>
<div class="a" style="left:1217px;top:898px;width:27px;height:17px;background:#666;border-radius:2px"></div>
<div class="a" style="left:1230px;top:898px;width:1px;height:17px;background:#4a4a4a"></div>
<svg style="left:1217px;top:898px" width="27" height="17"><path d="M9,5 L5,8.5 L9,12 Z M18,5 L22,8.5 L18,12 Z" fill="#ddd"/></svg>
<div class="a" style="left:1249px;top:904px;width:300px;height:4px;background:#2a2a2a;border-radius:2px"></div>
<div class="a" style="left:1429px;top:899px;width:23px;height:14px;background:#9a9a9a;border-radius:3px"></div>
<div class="a" style="left:39px;top:947px;width:1512px;height:21px;background:#3a3a3a"></div>
<div class="t" style="left:49px;top:952px;color:#cfcfcf;font-size:11.5px">Level Palette: GreatSwordKnight_idle_color.0001_1</div>
<svg style="left:1497px;top:949px" width="17" height="16"><rect width="17" height="16" fill="#f5d000"/><path d="M5.2,5 A4.6,4.6 0 1 0 11.8,5" fill="none" stroke="#333" stroke-width="1.3"/><path d="M8.5,3 V8.5" stroke="#333" stroke-width="1.3"/></svg>
<div class="a" style="left:39px;top:968px;width:1512px;height:22px;background:#3c3c3c"></div>
<div class="a" style="left:39px;top:968px;width:120px;height:22px;background:#4a4a4a"></div>
<svg style="left:46px;top:974px" width="13" height="11" fill="#ddd"><rect x="0" y="0.0" width="2" height="2"/><rect x="0" y="3.4" width="2" height="2"/><rect x="0" y="6.8" width="2" height="2"/><rect x="3" y="0.0" width="2" height="2"/><rect x="3" y="3.4" width="2" height="2"/><rect x="3" y="6.8" width="2" height="2"/><rect x="6" y="0.0" width="2" height="2"/><rect x="6" y="3.4" width="2" height="2"/><rect x="6" y="6.8" width="2" height="2"/><rect x="9" y="0.0" width="2" height="2"/><rect x="9" y="3.4" width="2" height="2"/><rect x="9" y="6.8" width="2" height="2"/></svg>
<div class="t" style="left:95px;top:973px;color:#e8e8e8;font-size:12px">colors</div>
<div class="a" style="left:1281px;top:968px;width:270px;height:22px;background:#484848"></div>
<svg style="left:0;top:0" width="1551" height="1050">
<rect x="1311" y="968" width="1" height="22" fill="#333"/>
<rect x="1366" y="968" width="1" height="22" fill="#333"/>
<rect x="1436" y="968" width="1" height="22" fill="#333"/>
<rect x="1493" y="968" width="1" height="22" fill="#333"/>
<g fill="#ececec"><rect x="1289" y="976" width="2" height="2"/><rect x="1289" y="979" width="2" height="2"/><rect x="1289" y="982" width="2" height="2"/><rect x="1292" y="976" width="2" height="2"/><rect x="1292" y="979" width="2" height="2"/><rect x="1292" y="982" width="2" height="2"/><rect x="1295" y="976" width="2" height="2"/><rect x="1295" y="979" width="2" height="2"/><rect x="1295" y="982" width="2" height="2"/><rect x="1298" y="976" width="2" height="2"/><rect x="1298" y="979" width="2" height="2"/><rect x="1298" y="982" width="2" height="2"/></g><path d="M1300,977 L1305,972 M1302,972 h3 v3" stroke="#ececec" stroke-width="1.2" fill="none"/>
<path d="M1318,972 h11 l3,3 v11 h-14 z" fill="#ececec"/><rect x="1321" y="973" width="5" height="4" fill="#444"/><path d="M1322,984 L1333,973" stroke="#444" stroke-width="2"/>
<path d="M1345,972 h11 l3,3 v11 h-14 z" fill="#ececec"/><rect x="1348" y="973" width="6" height="4" fill="#444"/><rect x="1348" y="980" width="8" height="5" fill="#444"/>
<path d="M1383,973 L1372,979 L1383,985 Z" fill="#5c5c5c" stroke="#2e2e2e" stroke-width="1.2"/>
<rect x="1393" y="970" width="16" height="16" rx="1.5" fill="#777"/><circle cx="1401" cy="975" r="2.5" fill="none" stroke="#eee" stroke-width="1.5"/><path d="M1401,977.5 V984 M1401,981 h2 M1401,983 h2" stroke="#eee" stroke-width="1.4"/>
<path d="M1419,973 L1430,979 L1419,985 Z" fill="#5c5c5c" stroke="#2e2e2e" stroke-width="1.2"/>
<path d="M1445,975 h13 v7 h-10 l-3,-3 z" fill="#ececec"/>
<path d="M1476,972 h4 l1,2 h5 v8 h-10 l-3,-3 z" fill="#ececec"/>
<g fill="#ececec"><rect x="1501" y="973" width="12" height="1.8"/><rect x="1501" y="977" width="12" height="1.8"/><rect x="1501" y="981" width="12" height="1.8"/><rect x="1501" y="985" width="8" height="1.8"/><path d="M1512,983 h5 l-2.5,3.5 z"/></g>
<rect x="1531" y="979" width="9" height="7" fill="#ececec"/><path d="M1538,979 V975 a3,3 0 0 1 6,0 V977" fill="none" stroke="#ececec" stroke-width="1.5"/><rect x="1535" y="981" width="1.5" height="3" fill="#444"/>
</svg>
<div class="a" style="left:39px;top:990px;width:1512px;height:60px;background:#484848"></div>
<div class="a" style="left:40px;top:991px;width:481px;height:34px;background:#3a3a3a;border:2px solid #a8a8a8"></div>
<div class="a" style="left:45px;top:996px;width:40px;height:25px;background:#ffffff;border:1px solid #111"></div>
<div class="a" style="left:73px;top:1004px;width:11px;height:16px;background:#fff;border:1px solid #111;border-right:none;border-bottom:none"></div>
<div class="t" style="left:74px;top:1006px;width:10px;text-align:center;color:#000;font-size:14px;line-height:14px;letter-spacing:-0.6px">0</div>
<div class="a" style="left:93px;top:996px;width:40px;height:25px;background:#000000;border:1px solid #111"></div>
<div class="a" style="left:121px;top:1004px;width:11px;height:16px;background:#fff;border:1px solid #111;border-right:none;border-bottom:none"></div>
<div class="t" style="left:122px;top:1006px;width:10px;text-align:center;color:#000;font-size:14px;line-height:14px;letter-spacing:-0.6px">1</div>
<div class="a" style="left:141px;top:996px;width:40px;height:25px;background:#334466;border:1px solid #111"></div>
<div class="a" style="left:169px;top:1004px;width:11px;height:16px;background:#fff;border:1px solid #111;border-right:none;border-bottom:none"></div>
<div class="t" style="left:170px;top:1006px;width:10px;text-align:center;color:#000;font-size:14px;line-height:14px;letter-spacing:-0.6px">2</div>
<div class="a" style="left:189px;top:996px;width:40px;height:25px;background:#b8c6d4;border:1px solid #111"></div>
<div class="a" style="left:217px;top:1004px;width:11px;height:16px;background:#fff;border:1px solid #111;border-right:none;border-bottom:none"></div>
<div class="t" style="left:218px;top:1006px;width:10px;text-align:center;color:#000;font-size:14px;line-height:14px;letter-spacing:-0.6px">3</div>
<div class="a" style="left:237px;top:996px;width:40px;height:25px;background:#8a9aae;border:1px solid #111"></div>
<div class="a" style="left:265px;top:1004px;width:11px;height:16px;background:#fff;border:1px solid #111;border-right:none;border-bottom:none"></div>
<div class="t" style="left:266px;top:1006px;width:10px;text-align:center;color:#000;font-size:14px;line-height:14px;letter-spacing:-0.6px">4</div>
<div class="a" style="left:285px;top:996px;width:40px;height:25px;background:#5d6a7e;border:1px solid #111"></div>
<div class="a" style="left:313px;top:1004px;width:11px;height:16px;background:#fff;border:1px solid #111;border-right:none;border-bottom:none"></div>
<div class="t" style="left:314px;top:1006px;width:10px;text-align:center;color:#000;font-size:14px;line-height:14px;letter-spacing:-0.6px">5</div>
<div class="a" style="left:333px;top:996px;width:40px;height:25px;background:#2e7490;border:1px solid #111"></div>
<div class="a" style="left:361px;top:1004px;width:11px;height:16px;background:#fff;border:1px solid #111;border-right:none;border-bottom:none"></div>
<div class="t" style="left:362px;top:1006px;width:10px;text-align:center;color:#000;font-size:14px;line-height:14px;letter-spacing:-0.6px">6</div>
<div class="a" style="left:381px;top:996px;width:40px;height:25px;background:#1e4f74;border:1px solid #111"></div>
<div class="a" style="left:409px;top:1004px;width:11px;height:16px;background:#fff;border:1px solid #111;border-right:none;border-bottom:none"></div>
<div class="t" style="left:410px;top:1006px;width:10px;text-align:center;color:#000;font-size:14px;line-height:14px;letter-spacing:-0.6px">7</div>
<div class="a" style="left:429px;top:996px;width:40px;height:25px;background:#162e4a;border:1px solid #111"></div>
<div class="a" style="left:457px;top:1004px;width:11px;height:16px;background:#fff;border:1px solid #111;border-right:none;border-bottom:none"></div>
<div class="t" style="left:458px;top:1006px;width:10px;text-align:center;color:#000;font-size:14px;line-height:14px;letter-spacing:-0.6px">8</div>
<div class="a" style="left:477px;top:996px;width:40px;height:25px;background:#aa1428;border:1px solid #111"></div>
<div class="a" style="left:505px;top:1004px;width:11px;height:16px;background:#fff;border:1px solid #111;border-right:none;border-bottom:none"></div>
<div class="t" style="left:506px;top:1006px;width:10px;text-align:center;color:#000;font-size:14px;line-height:14px;letter-spacing:-0.6px">9</div>
<div class="a" style="left:525px;top:996px;width:40px;height:25px;background:#7a3c20;border:1px solid #111"></div>
<div class="a" style="left:547px;top:1004px;width:17px;height:16px;background:#fff;border:1px solid #111;border-right:none;border-bottom:none"></div>
<div class="t" style="left:548px;top:1006px;width:16px;text-align:center;color:#000;font-size:14px;line-height:14px;letter-spacing:-0.6px">10</div>
<div class="a" style="left:573px;top:996px;width:40px;height:25px;background:#5e2d16;border:1px solid #111"></div>
<div class="a" style="left:595px;top:1004px;width:17px;height:16px;background:#fff;border:1px solid #111;border-right:none;border-bottom:none"></div>
<div class="t" style="left:596px;top:1006px;width:16px;text-align:center;color:#000;font-size:14px;line-height:14px;letter-spacing:-0.6px">11</div>
<div class="a" style="left:621px;top:996px;width:40px;height:25px;background:#45120c;border:1px solid #111"></div>
<div class="a" style="left:643px;top:1004px;width:17px;height:16px;background:#fff;border:1px solid #111;border-right:none;border-bottom:none"></div>
<div class="t" style="left:644px;top:1006px;width:16px;text-align:center;color:#000;font-size:14px;line-height:14px;letter-spacing:-0.6px">12</div>
<div class="a" style="left:669px;top:996px;width:40px;height:25px;background:#7a3e22;border:1px solid #111"></div>
<div class="a" style="left:691px;top:1004px;width:17px;height:16px;background:#fff;border:1px solid #111;border-right:none;border-bottom:none"></div>
<div class="t" style="left:692px;top:1006px;width:16px;text-align:center;color:#000;font-size:14px;line-height:14px;letter-spacing:-0.6px">13</div>
<div class="a" style="left:717px;top:996px;width:40px;height:25px;background:#3e4654;border:1px solid #111"></div>
<div class="a" style="left:739px;top:1004px;width:17px;height:16px;background:#fff;border:1px solid #111;border-right:none;border-bottom:none"></div>
<div class="t" style="left:740px;top:1006px;width:16px;text-align:center;color:#000;font-size:14px;line-height:14px;letter-spacing:-0.6px">15</div>
<div class="a" style="left:765px;top:996px;width:40px;height:25px;background:#ffffff;border:1px solid #111"></div>
<div class="a" style="left:787px;top:1004px;width:17px;height:16px;background:#fff;border:1px solid #111;border-right:none;border-bottom:none"></div>
<div class="t" style="left:788px;top:1006px;width:16px;text-align:center;color:#000;font-size:14px;line-height:14px;letter-spacing:-0.6px">16</div>
<div class="a" style="left:51px;top:1014px;width:5px;height:7px;background:#000"></div>
<div class="a" style="left:63px;top:1014px;width:5px;height:7px;background:#000"></div>
<div class="a" style="left:190px;top:1004px;width:12px;height:16px;background:#fff;border-right:1px solid #111;border-top:1px solid #111"></div>
<div class="t" style="left:190px;top:1006px;width:12px;text-align:center;color:#000;font-size:13px;line-height:14px">A</div>
<div class="a" style="left:377px;top:991px;width:48px;height:34px;border:3px solid #fff;border-radius:1px"></div>
<div class="a" style="left:383px;top:998px;width:34px;height:19px;border:1px solid #fff;border-right:none"></div>
<div class="a" style="left:1535px;top:991px;width:14px;height:59px;background:#3c3c3c"></div>
<svg style="left:1535px;top:991px" width="14" height="59"><path d="M3,9 L7,5 L11,9 Z M3,48 L7,52 L11,48 Z" fill="#ccc"/><rect x="3" y="15" width="8" height="29" rx="4" fill="#555"/></svg>
<div class="a" style="left:1555px;top:75px;width:365px;height:21px;background:#3a3a3a"></div>
<div class="t" style="left:1565px;top:80px;color:#cfcfcf;font-size:11.5px">Level: &nbsp;GreatSwordKnight_idle_color.0001_1</div>
<div class="a" style="left:1555px;top:96px;width:365px;height:22px;background:#6b6b6b;border-top:1px solid #5a5a5a"></div>
<div class="t" style="left:1559px;top:102px;color:#e6e6e6;font-size:11.5px">GreatSwordKnight_idle_color.0001_1</div>
<svg style="left:1906px;top:104px" width="10" height="6"><path d="M0,0 H9 L4.5,5 Z" fill="#eee"/></svg>
<div class="a" style="left:1555px;top:118px;width:175px;height:445px;background:#000"></div>
<div class="a" style="left:1730px;top:118px;width:190px;height:4px;background:#000"></div>
<div class="a" style="left:1730px;top:122px;width:174px;height:441px;background:#484848"></div>
<div class="a" style="left:1904px;top:122px;width:16px;height:441px;background:#3b3b3b"></div>
<svg style="left:1904px;top:122px" width="16" height="441"><path d="M4,10 L8,6 L12,10 Z M4,429 L8,433 L12,429 Z" fill="#ccc"/><rect x="3.5" y="16" width="9" height="108" rx="4.5" fill="#555"/></svg>
<div class="a" style="left:1562px;top:130px;width:160px;height:100px;background:#fff;overflow:hidden">
<svg style="left:0;top:0" width="160" height="100"><use href="#mini0"/></svg>
</div>
<div class="t" style="left:1699px;top:235px;color:#e0e0e0;font-size:11px">0001</div>
<div class="a" style="left:1562px;top:256px;width:160px;height:100px;background:#fff;overflow:hidden">
<svg style="left:0;top:0" width="160" height="100"><use href="#mini1"/></svg>
</div>
<div class="t" style="left:1699px;top:361px;color:#e0e0e0;font-size:11px">0002</div>
<div class="a" style="left:1562px;top:382px;width:160px;height:100px;background:#fff;overflow:hidden">
<svg style="left:0;top:0" width="160" height="100"><use href="#mini1"/></svg>
</div>
<div class="t" style="left:1699px;top:487px;color:#e0e0e0;font-size:11px">0003</div>
<div class="a" style="left:1562px;top:508px;width:160px;height:55px;background:#fff;overflow:hidden">
<svg style="left:0;top:0" width="160" height="100"><use href="#mini1"/></svg>
</div>
<div class="a" style="left:1557px;top:125px;width:171px;height:115px;border:1px solid #f00"></div>
<svg width="0" height="0" style="left:0;top:0"><defs>
<g id="mini0" stroke="#000" stroke-width="1.6" stroke-linejoin="round">
<path fill="#8a95a6" d="M47,57 L56.6,61 L59.4,85.7 L52.8,85.7 L50.9,66.7 Z"/>
<path fill="#8a95a6" d="M82.3,61 L87,68.6 L100.4,83.8 L96.6,87.6 L85.1,74.3 L80,66 Z"/>
<path fill="#2c6a88" d="M56.6,45.7 L77.5,45.7 L94.7,61.9 L94.7,68.6 L81.3,61.9 L66.1,66.7 L56.6,65.7 L48,55.2 Z"/>
<path fill="#6b3a1c" stroke="none" d="M49,54 L58,55 L59.4,61 L50,60 Z M76.6,56 L81.3,57 L81,65 L77,63 Z"/>
<path fill="#1d4a66" stroke="none" d="M58,62 L66,66 L80,62 L74,60 Z"/>
<path fill="#2c6a88" d="M58.5,28.6 L73.7,28.6 L74,43.8 L60,44 Z"/>
<path fill="#8a95a6" d="M49.9,28.6 L56.6,23.8 L59.4,43.8 L54.7,47.6 L49.9,34.3 Z"/>
<path fill="#8a95a6" d="M69,19 L72.8,17.1 L81.3,24.8 L82.3,38 L74.7,42 L70,30 Z"/>
<path fill="#8a95a6" d="M61.3,7.1 L68,12.4 L69,23.8 L55.6,22.9 L56.6,17 Z"/>
<path fill="#f01010" stroke="none" d="M61,26 L68,25 L66,29 L62,29 Z"/>
<path fill="#8a95a6" d="M44.2,89.5 L59.4,83.8 L60.4,88.6 L49.9,91.4 Z"/>
<path fill="#8a95a6" d="M96.6,85.7 L108,89.5 L106.1,92.4 L96.6,91.4 Z"/>
</g>
<g id="mini1" stroke="#000" stroke-width="1.6" stroke-linejoin="round" fill="#fff">
<path d="M47,57 L56.6,61 L59.4,85.7 L52.8,85.7 L50.9,66.7 Z"/>
<path d="M82.3,61 L87,68.6 L100.4,83.8 L96.6,87.6 L85.1,74.3 L80,66 Z"/>
<path d="M56.6,45.7 L77.5,45.7 L94.7,61.9 L94.7,68.6 L81.3,61.9 L66.1,66.7 L56.6,65.7 L48,55.2 Z"/>
<path fill="#2c6a88" d="M58.5,28.6 L73.7,28.6 L74,43.8 L60,44 Z"/>
<path d="M49.9,28.6 L56.6,23.8 L59.4,43.8 L54.7,47.6 L49.9,34.3 Z"/>
<path fill="#8a95a6" d="M69,19 L72.8,17.1 L81.3,24.8 L82.3,38 L74.7,42 L70,30 Z"/>
<path fill="#8a95a6" d="M61.3,7.1 L68,12.4 L69,23.8 L55.6,22.9 L56.6,17 Z"/>
<path d="M44.2,89.5 L59.4,83.8 L60.4,88.6 L49.9,91.4 Z"/>
<path d="M96.6,85.7 L108,89.5 L106.1,92.4 L96.6,91.4 Z"/>
</g>
</defs></svg>
<div class="a" style="left:1555px;top:567px;width:365px;height:20px;background:#3a3a3a"></div>
<div class="t" style="left:1565px;top:573px;color:#cfcfcf;font-size:11.5px">Scene: GreatSwordKnight_idle &nbsp;:: &nbsp;9 Frames &nbsp;Level: GreatS...</div>
<div class="a" style="left:1555px;top:587px;width:365px;height:463px;background:#484848"></div>
<div class="a" style="left:1558px;top:591px;width:68px;height:21px;background:#676767;border-radius:3px"></div>
<svg style="left:1558px;top:591px" width="68" height="21"><rect x="15" y="5" width="15" height="11" fill="#e8e8e8" stroke="#333" stroke-width="0.8"/><rect x="15" y="5" width="15" height="2.5" fill="#fff"/><path d="M38,6 L34,10.5 L38,15 Z" fill="#ddd"/><rect x="40" y="4" width="12" height="13" fill="#999" stroke="#333" stroke-width="0.8"/><rect x="40" y="4" width="3" height="13" fill="#bbb"/></svg>
<svg style="left:1558px;top:632px" width="68" height="22"><path d="M4,14 L10,10 L10,18 Z M63,14 L57,10 L57,18 Z" fill="#5c5c5c"/><path d="M22,12 L27,8 V12 Z" fill="#eee"/><rect x="22" y="12" width="18" height="8" fill="#eee"/><path d="M31,10 V18 M27,14 H35" stroke="#333" stroke-width="1.5"/></svg>
<div class="a" style="left:1558px;top:683px;width:68px;height:19px;background:#626262;border-radius:3px"></div>
<div class="t" style="left:1562px;top:687px;color:#e0e0e0;font-size:11.5px">Frame</div>
<svg style="left:1610px;top:689px" width="10" height="6"><path d="M0,0 H9 L4.5,5 Z" fill="#eee"/></svg>
<div class="a" style="left:1629px;top:588px;width:273px;height:117px;border:1px solid #9a9a9a;border-right:none;background:#2a2a2a"></div>
<svg style="left:0;top:0" width="1920" height="1050"><rect x="1630" y="589" width="49" height="17" fill="#4e4e4e"/><rect x="1630" y="607" width="31" height="16" fill="#4e4e4e"/><rect x="1662" y="607" width="17" height="16" fill="#4e4e4e"/><rect x="1630" y="625" width="31" height="16" fill="#4e4e4e"/><rect x="1662" y="625" width="17" height="16" fill="#4e4e4e"/><rect x="1630" y="643" width="49" height="43" fill="#fff"/><rect x="1630" y="687" width="49" height="17" fill="#4e4e4e"/><g fill="#777"><path d="M1667.0,615 v-2.5 a3.5,3.5 0 0 1 7,0 v2.5" fill="none" stroke="#777" stroke-width="1.5"/><rect x="1666.0" y="615" width="9" height="6"/></g><path d="M1666.5,631 h8 l-4,4 z" fill="#eee"/><path d="M1639.0,613 q7,5 14,0" fill="none" stroke="#888" stroke-width="1.2"/><path d="M1630,627.5 a6,6 0 0 1 0,11" fill="none" stroke="#777" stroke-width="1.2"/><rect x="1680" y="589" width="73" height="17" fill="#4e4e4e"/><rect x="1680" y="607" width="55" height="16" fill="#4e4e4e"/><rect x="1736" y="607" width="17" height="16" fill="#4e4e4e"/><rect x="1680" y="625" width="55" height="16" fill="#ec8d68"/><rect x="1736" y="625" width="17" height="16" fill="#4e4e4e"/><rect x="1680" y="643" width="73" height="43" fill="#fff"/><rect x="1680" y="687" width="73" height="17" fill="#4e4e4e"/><g fill="#777"><path d="M1741.0,615 v-2.5 a3.5,3.5 0 0 1 7,0 v2.5" fill="none" stroke="#777" stroke-width="1.5"/><rect x="1740.0" y="615" width="9" height="6"/></g><path d="M1740.5,631 h8 l-4,4 z" fill="#eee"/><path d="M1701.0,613 q7,5 14,0" fill="none" stroke="#888" stroke-width="1.2"/><circle cx="1708.0" cy="633" r="6.5" fill="#fff" stroke="#111" stroke-width="1"/><rect x="1704.5" y="629.5" width="7" height="7" fill="#333"/><rect x="1754" y="589" width="73" height="17" fill="#66633a"/><rect x="1754" y="607" width="55" height="16" fill="#c9c66a"/><rect x="1810" y="607" width="17" height="16" fill="#66633a"/><rect x="1754" y="625" width="55" height="16" fill="#ec8d68"/><rect x="1810" y="625" width="17" height="16" fill="#66633a"/><rect x="1754" y="643" width="73" height="43" fill="#fff"/><rect x="1754" y="687" width="73" height="17" fill="#66633a"/><g fill="#777"><path d="M1815.0,615 v-2.5 a3.5,3.5 0 0 1 7,0 v2.5" fill="none" stroke="#777" stroke-width="1.5"/><rect x="1814.0" y="615" width="9" height="6"/></g><path d="M1814.5,631 h8 l-4,4 z" fill="#eee"/><ellipse cx="1782.0" cy="615" rx="7.5" ry="4.5" fill="#fff" stroke="#111" stroke-width="1.6"/><circle cx="1782.0" cy="615" r="2.6" fill="#111"/><circle cx="1782.0" cy="633" r="6.5" fill="#fff" stroke="#111" stroke-width="1"/><rect x="1778.5" y="629.5" width="7" height="7" fill="#333"/><rect x="1828" y="589" width="73" height="17" fill="#3f5a3f"/><rect x="1828" y="607" width="55" height="16" fill="#c9c66a"/><rect x="1884" y="607" width="17" height="16" fill="#3f5a3f"/><rect x="1828" y="625" width="55" height="16" fill="#ec8d68"/><rect x="1884" y="625" width="17" height="16" fill="#3f5a3f"/><rect x="1828" y="643" width="73" height="43" fill="#fff"/><rect x="1828" y="687" width="73" height="17" fill="#3f5a3f"/><g fill="#777"><path d="M1889.0,615 v-2.5 a3.5,3.5 0 0 1 7,0 v2.5" fill="none" stroke="#777" stroke-width="1.5"/><rect x="1888.0" y="615" width="9" height="6"/></g><path d="M1888.5,631 h8 l-4,4 z" fill="#eee"/><ellipse cx="1856.0" cy="615" rx="7.5" ry="4.5" fill="#fff" stroke="#111" stroke-width="1.6"/><circle cx="1856.0" cy="615" r="2.6" fill="#111"/><circle cx="1856.0" cy="633" r="6.5" fill="#fff" stroke="#111" stroke-width="1"/><rect x="1852.5" y="629.5" width="7" height="7" fill="#333"/></svg>
<div class="t" style="left:1684px;top:592px;color:#ff1010;font-size:12px">Col2</div>
<div class="t" style="left:1758px;top:592px;color:#e4e4e4;font-size:12px">Col3</div>
<div class="t" style="left:1832px;top:592px;color:#e4e4e4;font-size:12px">Col4</div>
<div class="t" style="left:1631px;top:690px;color:#e4e4e4;font-size:12px">e</div>
<div class="t" style="left:1683px;top:690px;color:#e4e4e4;font-size:12px">Table</div>
<div class="t" style="left:1757px;top:690px;color:#e4e4e4;font-size:12px">Table</div>
<div class="t" style="left:1831px;top:690px;color:#e4e4e4;font-size:12px">Table</div>
<svg style="left:0;top:0" width="1920" height="1050">
<g stroke="none">
<path fill="#9aa5b4" d="M1636,652 L1641,651 L1643,656 L1646,660 L1640,662 Z"/>
<path fill="#2c6a88" d="M1637,659 L1645,658 L1647,666 L1640,668 Z"/>
<path fill="#b0b8c4" d="M1632,668 L1638,666 L1636,676 L1631,677 Z M1644,667 L1648,668 L1652,676 L1648,677 Z"/>
<path fill="#a04030" d="M1633,667 L1637,666 L1636,670 Z M1645,666 L1649,667 L1648,670 Z"/>
<path d="M1644,666 L1666,666" stroke="#8a95a6" stroke-width="1.3"/>
<path fill="#111" d="M1709,646 L1713,647 L1714,652 L1719,654 L1720,662 L1722,668 L1724,674 L1727,681 L1726,684 L1722,683 L1719,676 L1716,670 L1713,670 L1710,676 L1707,683 L1703,683 L1705,676 L1706,668 L1704,662 L1705,654 L1708,652 Z"/>
<path fill="#2c6a88" d="M1708,664 L1716,664 L1718,670 L1707,671 Z"/>
<path fill="#e01020" d="M1710,652 L1713,652 L1712,655 Z"/>
<path fill="#8a95a6" d="M1706,656 L1708,656 L1707,661 Z M1717,656 L1719,656 L1719,661 Z"/>
</g>
<path d="M1765,665 L1773,671 L1771.6,653.5 L1773,662 L1780,661 L1794,654 L1793,664 L1783,669 L1772,666" fill="#333" stroke="#111" stroke-width="1.8" stroke-linejoin="round"/>
<path d="M1800,670 L1804,674 L1815,669" fill="none" stroke="#111" stroke-width="2.2"/>
<path d="M1854,662 L1886,667.6" stroke="#111" stroke-width="1.8"/>
<circle cx="1884" cy="671" r="0.7" fill="#111"/>
</svg>
<div class="a" style="left:1555px;top:707px;width:74px;height:325px;background:#3d3d3d"></div>
<div class="a" style="left:1555px;top:707px;width:27px;height:180px;background:#363636"></div>
<div class="a" style="left:1629px;top:707px;width:273px;height:325px;background:#262626"></div>
<svg style="left:0;top:0" width="1920" height="1050"><rect x="1555" y="707" width="75" height="1" fill="#2a2a2a"/><rect x="1630" y="708" width="49" height="19" fill="#5a5a5a"/><rect x="1680" y="708" width="73" height="19" fill="#686868"/><rect x="1754" y="708" width="73" height="19" fill="#7c7a4a"/><rect x="1828" y="708" width="73" height="19" fill="#50704f"/><rect x="1555" y="727" width="75" height="1" fill="#2a2a2a"/><rect x="1630" y="728" width="49" height="19" fill="#3f3f3f"/><rect x="1680" y="728" width="73" height="19" fill="#686868"/><rect x="1754" y="728" width="73" height="19" fill="#7c7a4a"/><rect x="1828" y="728" width="73" height="19" fill="#50704f"/><rect x="1555" y="747" width="75" height="1" fill="#2a2a2a"/><rect x="1630" y="748" width="49" height="19" fill="#3f3f3f"/><rect x="1680" y="748" width="73" height="19" fill="#686868"/><rect x="1754" y="748" width="73" height="19" fill="#3f3f3f"/><rect x="1828" y="748" width="73" height="19" fill="#50704f"/><rect x="1555" y="767" width="75" height="1" fill="#2a2a2a"/><rect x="1630" y="768" width="49" height="19" fill="#3f3f3f"/><rect x="1680" y="768" width="73" height="19" fill="#686868"/><rect x="1754" y="768" width="73" height="19" fill="#3f3f3f"/><rect x="1828" y="768" width="73" height="19" fill="#50704f"/><rect x="1555" y="787" width="75" height="1" fill="#2a2a2a"/><rect x="1630" y="788" width="49" height="19" fill="#3f3f3f"/><rect x="1680" y="788" width="73" height="19" fill="#686868"/><rect x="1754" y="788" width="73" height="19" fill="#3f3f3f"/><rect x="1828" y="788" width="73" height="19" fill="#50704f"/><rect x="1555" y="807" width="75" height="1" fill="#2a2a2a"/><rect x="1630" y="808" width="49" height="19" fill="#3f3f3f"/><rect x="1680" y="808" width="73" height="19" fill="#686868"/><rect x="1754" y="808" width="73" height="19" fill="#3f3f3f"/><rect x="1828" y="808" width="73" height="19" fill="#50704f"/><rect x="1555" y="827" width="75" height="1" fill="#2a2a2a"/><rect x="1630" y="828" width="49" height="19" fill="#3f3f3f"/><rect x="1680" y="828" width="73" height="19" fill="#686868"/><rect x="1754" y="828" width="73" height="19" fill="#3f3f3f"/><rect x="1828" y="828" width="73" height="19" fill="#50704f"/><rect x="1555" y="847" width="75" height="1" fill="#2a2a2a"/><rect x="1630" y="848" width="49" height="19" fill="#3f3f3f"/><rect x="1680" y="848" width="73" height="19" fill="#686868"/><rect x="1754" y="848" width="73" height="19" fill="#3f3f3f"/><rect x="1828" y="848" width="73" height="19" fill="#50704f"/><rect x="1555" y="867" width="75" height="1" fill="#2a2a2a"/><rect x="1630" y="868" width="49" height="19" fill="#3f3f3f"/><rect x="1680" y="868" width="73" height="19" fill="#686868"/><rect x="1754" y="868" width="73" height="19" fill="#3f3f3f"/><rect x="1828" y="868" width="73" height="19" fill="#50704f"/><rect x="1555" y="887" width="75" height="1" fill="#2a2a2a"/><rect x="1630" y="888" width="49" height="19" fill="#3f3f3f"/><rect x="1680" y="888" width="73" height="19" fill="#3f3f3f"/><rect x="1754" y="888" width="73" height="19" fill="#3f3f3f"/><rect x="1828" y="888" width="73" height="19" fill="#3f3f3f"/><rect x="1555" y="907" width="75" height="1" fill="#2a2a2a"/><rect x="1630" y="908" width="49" height="19" fill="#3f3f3f"/><rect x="1680" y="908" width="73" height="19" fill="#3f3f3f"/><rect x="1754" y="908" width="73" height="19" fill="#3f3f3f"/><rect x="1828" y="908" width="73" height="19" fill="#3f3f3f"/><rect x="1555" y="927" width="75" height="1" fill="#2a2a2a"/><rect x="1630" y="928" width="49" height="19" fill="#3f3f3f"/><rect x="1680" y="928" width="73" height="19" fill="#3f3f3f"/><rect x="1754" y="928" width="73" height="19" fill="#3f3f3f"/><rect x="1828" y="928" width="73" height="19" fill="#3f3f3f"/><rect x="1555" y="947" width="75" height="1" fill="#2a2a2a"/><rect x="1630" y="948" width="49" height="19" fill="#3f3f3f"/><rect x="1680" y="948" width="73" height="19" fill="#3f3f3f"/><rect x="1754" y="948" width="73" height="19" fill="#3f3f3f"/><rect x="1828" y="948" width="73" height="19" fill="#3f3f3f"/><rect x="1555" y="967" width="75" height="1" fill="#2a2a2a"/><rect x="1630" y="968" width="49" height="19" fill="#3f3f3f"/><rect x="1680" y="968" width="73" height="19" fill="#3f3f3f"/><rect x="1754" y="968" width="73" height="19" fill="#3f3f3f"/><rect x="1828" y="968" width="73" height="19" fill="#3f3f3f"/><rect x="1555" y="987" width="75" height="1" fill="#2a2a2a"/><rect x="1630" y="988" width="49" height="19" fill="#3f3f3f"/><rect x="1680" y="988" width="73" height="19" fill="#3f3f3f"/><rect x="1754" y="988" width="73" height="19" fill="#3f3f3f"/><rect x="1828" y="988" width="73" height="19" fill="#3f3f3f"/><rect x="1555" y="1007" width="75" height="1" fill="#2a2a2a"/><rect x="1630" y="1008" width="49" height="19" fill="#3f3f3f"/><rect x="1680" y="1008" width="73" height="19" fill="#3f3f3f"/><rect x="1754" y="1008" width="73" height="19" fill="#3f3f3f"/><rect x="1828" y="1008" width="73" height="19" fill="#3f3f3f"/><rect x="1555" y="1027" width="75" height="1" fill="#2a2a2a"/><rect x="1630" y="1028" width="49" height="19" fill="#3f3f3f"/><rect x="1680" y="1028" width="73" height="19" fill="#3f3f3f"/><rect x="1754" y="1028" width="73" height="19" fill="#3f3f3f"/><rect x="1828" y="1028" width="73" height="19" fill="#3f3f3f"/></svg>
<div class="a" style="left:1556px;top:708px;width:73px;height:19px;background:#4e5f80"></div>
<svg style="left:1559px;top:708px" width="40" height="20"><path d="M1,10 a9.5,9.5 0 0 1 19,0 Z" fill="#b23040" stroke="#e81010" stroke-width="1"/><path d="M1,10 a9.5,9.5 0 0 0 19,0 Z" fill="#2a9a3a" stroke="#10e010" stroke-width="1"/><path d="M24,0 h8 L24,8 Z" fill="#fff" stroke="#111" stroke-width="0.8"/></svg>
<div class="t" style="left:1590px;top:711px;width:40px;text-align:center;color:#8cc0f0;font-size:12px;font-weight:bold">1</div>
<div class="t" style="left:1590px;top:731px;width:40px;text-align:center;color:#8cc0f0;font-size:12px;font-weight:bold">2</div>
<div class="t" style="left:1590px;top:751px;width:40px;text-align:center;color:#8cc0f0;font-size:12px;font-weight:bold">3</div>
<div class="t" style="left:1590px;top:771px;width:40px;text-align:center;color:#8cc0f0;font-size:12px;font-weight:bold">4</div>
<div class="t" style="left:1590px;top:791px;width:40px;text-align:center;color:#8cc0f0;font-size:12px;font-weight:bold">5</div>
<div class="t" style="left:1590px;top:811px;width:40px;text-align:center;color:#8cc0f0;font-size:12px;font-weight:bold">6</div>
<div class="t" style="left:1590px;top:831px;width:40px;text-align:center;color:#8cc0f0;font-size:12px;font-weight:bold">7</div>
<div class="t" style="left:1590px;top:851px;width:40px;text-align:center;color:#8cc0f0;font-size:12px;font-weight:bold">8</div>
<div class="t" style="left:1590px;top:871px;width:40px;text-align:center;color:#8cc0f0;font-size:12px;font-weight:bold">9</div>
<div class="t" style="left:1590px;top:891px;width:40px;text-align:center;color:#e8e8e8;font-size:12px;font-weight:bold">10</div>
<div class="t" style="left:1590px;top:911px;width:40px;text-align:center;color:#e8e8e8;font-size:12px;font-weight:bold">11</div>
<div class="t" style="left:1590px;top:931px;width:40px;text-align:center;color:#e8e8e8;font-size:12px;font-weight:bold">12</div>
<div class="t" style="left:1590px;top:951px;width:40px;text-align:center;color:#e8e8e8;font-size:12px;font-weight:bold">13</div>
<div class="t" style="left:1590px;top:971px;width:40px;text-align:center;color:#e8e8e8;font-size:12px;font-weight:bold">14</div>
<div class="t" style="left:1590px;top:991px;width:40px;text-align:center;color:#e8e8e8;font-size:12px;font-weight:bold">15</div>
<div class="t" style="left:1590px;top:1011px;width:40px;text-align:center;color:#e8e8e8;font-size:12px;font-weight:bold">16</div>
<div class="a" style="left:1556px;top:827px;width:347px;height:1px;background:#2a9ad8"></div>
<div class="a" style="left:1556px;top:947px;width:347px;height:1px;background:#2a9ad8"></div>
<div class="a" style="left:1681px;top:708px;width:5px;height:179px;background:#a8a8a8"></div>
<div class="a" style="left:1755px;top:708px;width:5px;height:39px;background:#c0bf8e"></div>
<div class="a" style="left:1829px;top:708px;width:5px;height:179px;background:#8fb58e"></div>
<div class="a" style="left:1679px;top:707px;width:75px;height:21px;border:2px solid #000"></div>
<div class="a" style="left:1724px;top:728px;width:18px;height:7px;background:#bbb;border:1px solid #111;border-radius:0 0 4px 4px"></div>
<div class="t" style="left:1631px;top:714px;color:#ddd;font-size:12px">:0_1</div>
<div class="t" style="left:1688px;top:714px;color:#ddd;font-size:11.5px">GreatSw~ 1</div>
<div class="t" style="left:1761px;top:714px;color:#eee;font-size:11.5px">randomt~1</div>
<div class="t" style="left:1836px;top:714px;color:#eee;font-size:11.5px">greatsw~ &nbsp;1</div>
<div class="t" style="left:1735px;top:734px;width:12px;text-align:right;color:#ddd;font-size:12px">2</div>
<div class="t" style="left:1883px;top:734px;width:12px;text-align:right;color:#eee;font-size:12px">2</div>
<div class="t" style="left:1735px;top:754px;width:12px;text-align:right;color:#ddd;font-size:12px">3</div>
<div class="t" style="left:1883px;top:754px;width:12px;text-align:right;color:#eee;font-size:12px">3</div>
<div class="t" style="left:1735px;top:774px;width:12px;text-align:right;color:#ddd;font-size:12px">4</div>
<div class="t" style="left:1883px;top:774px;width:12px;text-align:right;color:#eee;font-size:12px">4</div>
<div class="t" style="left:1735px;top:794px;width:12px;text-align:right;color:#ddd;font-size:12px">5</div>
<div class="t" style="left:1883px;top:794px;width:12px;text-align:right;color:#eee;font-size:12px">5</div>
<div class="t" style="left:1735px;top:814px;width:12px;text-align:right;color:#ddd;font-size:12px">6</div>
<div class="t" style="left:1883px;top:814px;width:12px;text-align:right;color:#eee;font-size:12px">6</div>
<div class="t" style="left:1735px;top:834px;width:12px;text-align:right;color:#ddd;font-size:12px">7</div>
<div class="t" style="left:1883px;top:834px;width:12px;text-align:right;color:#eee;font-size:12px">7</div>
<div class="t" style="left:1735px;top:854px;width:12px;text-align:right;color:#ddd;font-size:12px">8</div>
<div class="t" style="left:1883px;top:854px;width:12px;text-align:right;color:#eee;font-size:12px">8</div>
<div class="t" style="left:1735px;top:874px;width:12px;text-align:right;color:#ddd;font-size:12px">9</div>
<div class="t" style="left:1883px;top:874px;width:12px;text-align:right;color:#eee;font-size:12px">9</div>
<div class="t" style="left:1809px;top:734px;width:12px;text-align:right;color:#eee;font-size:12px">2</div>
<svg style="left:0;top:0" width="1920" height="1050"><path d="M1630,729 L1679,746 M1630,746 L1679,729" stroke="#888" stroke-width="0.8"/><path d="M1754,749 L1827,766 M1754,766 L1827,749" stroke="#888" stroke-width="0.8"/><path d="M1680,889 L1753,906 M1680,906 L1753,889" stroke="#888" stroke-width="0.8"/><path d="M1828,889 L1901,906 M1828,906 L1901,889" stroke="#888" stroke-width="0.8"/></svg>
<svg style="left:1582px;top:877px" width="12" height="12"><path d="M1,1 L1,10 L10,10 Z" fill="#fff" stroke="#111" stroke-width="0.8"/></svg>
<div class="a" style="left:1903px;top:707px;width:17px;height:325px;background:#3b3b3b"></div>
<svg style="left:1903px;top:707px" width="17" height="325"><path d="M4,11 L8,7 L12,11 Z M4,313 L8,317 L12,313 Z" fill="#ccc"/><rect x="4" y="16" width="9" height="293" rx="4.5" fill="#555"/></svg>
<div class="a" style="left:1555px;top:1032px;width:365px;height:18px;background:#3b3b3b"></div>
<div class="a" style="left:1555px;top:1032px;width:75px;height:18px;background:#484848"></div>
<svg style="left:1630px;top:1032px" width="290" height="18"><path d="M9,9 L13,5.5 V12.5 Z M267,5.5 L271,9 L267,12.5 Z" fill="#ccc"/><rect x="33" y="4" width="172" height="10" rx="5" fill="#555"/></svg><svg style="left:0;top:0" width="1920" height="1050">
<path d="M1680.5,887 L1686,881 L1686,887 Z" fill="#686868"/>
<path d="M1754.5,747 L1760,741 L1760,747 Z" fill="#7c7a4a"/>
<path d="M1828.5,887 L1834,881 L1834,887 Z" fill="#50704f"/>
</svg>
<svg style="left:1310px;top:75px" width="241" height="21">
<rect x="12.5" y="5.5" width="13" height="10" fill="none" stroke="#e6e6e6"/>
<rect x="15" y="8" width="8" height="5" fill="none" stroke="#e6e6e6"/>
<g fill="#e6e6e6">
<rect x="35" y="5" width="3" height="3"/><rect x="39" y="5" width="3" height="3"/><rect x="43" y="5" width="3" height="3"/>
<rect x="35" y="9" width="3" height="3"/><rect x="39" y="9" width="3" height="3"/><rect x="43" y="9" width="3" height="3"/>
<rect x="35" y="13" width="3" height="3"/><rect x="39" y="13" width="3" height="3"/><rect x="43" y="13" width="3" height="3"/>
</g>
<rect x="60" y="0" width="20" height="21" fill="#5a86ad"/>
<circle cx="70" cy="10.5" r="7" fill="#ddd" stroke="#222" stroke-width="1"/>
<rect x="66" y="6.5" width="8" height="8" fill="#444"/>
<g fill="#e6e6e6">
<path d="M86,7 L90,5 L90,11 L86,13 Z"/><path d="M90,9 L94,7 L94,13 L90,15 Z"/><path d="M94,11 L98,9 L98,15 L94,17 Z"/>
<rect x="105" y="6" width="10" height="9" rx="1"/><path d="M115,9 L119,6.5 V14.5 L115,12 Z"/>
<rect x="137" y="5" width="3" height="11"/><rect x="143" y="5" width="3" height="11"/>
</g>
<path d="M167,10.5 Q174.5,3 182,10.5 Q174.5,18 167,10.5 Z" fill="#eee"/>
<circle cx="174.5" cy="10.5" r="3.2" fill="#333"/><circle cx="173.5" cy="9.5" r="1" fill="#eee"/>
<rect x="191.5" y="2.5" width="18" height="16" fill="none" stroke="#ddd" stroke-dasharray="1 1"/>
<path d="M193,10.5 Q200.5,3 208,10.5 Q200.5,18 193,10.5 Z" fill="#eee"/>
<circle cx="200.5" cy="10.5" r="3.2" fill="#333"/><circle cx="199.5" cy="9.5" r="1" fill="#eee"/>
</svg>

</body></html>
